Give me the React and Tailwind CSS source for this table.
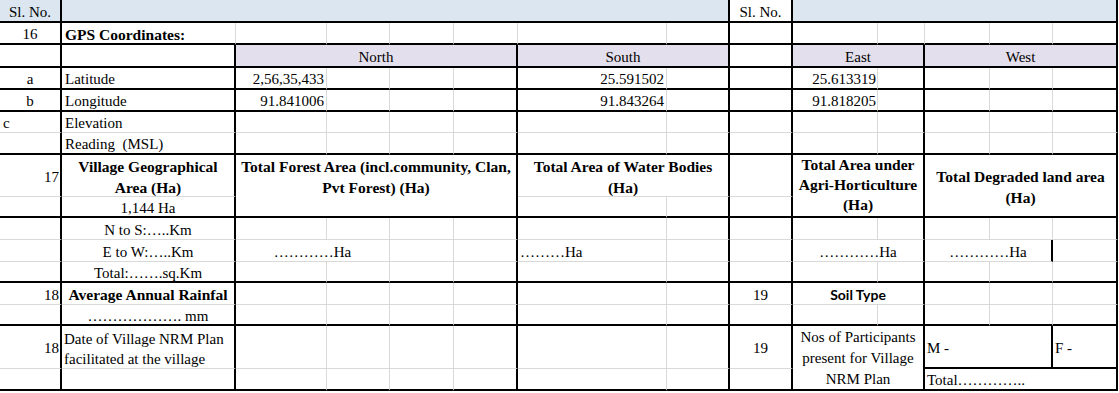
import React from 'react';

// border classes for a cell's right / bottom edge
const rb = {
  k: 'border-r-2 border-r-black',
  g: 'border-r border-r-[#d9d9d9]',
};
const bb = {
  k: 'border-b-2 border-b-black',
  g: 'border-b border-b-[#d9d9d9]',
};

function C({ s = '', r = 'g', b = 'g', className = '', children }) {
  return (
    <div className={`${s} ${rb[r]} ${bb[b]} flex items-center whitespace-nowrap pt-[3px] ${className}`}>
      {children}
    </div>
  );
}

// empty cells C..N for the standard body rows
function Blanks({ b = 'g' }) {
  return (
    <>
      <C b={b} />
      <C b={b} />
      <C b={b} />
      <C r="k" b={b} />
      <C b={b} />
      <C r="k" b={b} />
      <C r="k" b={b} />
      <C b={b} />
      <C r="k" b={b} />
      <C b={b} />
      <C b={b} />
      <C r="k" b={b} />
    </>
  );
}

function Blank6({ b = 'g' }) {
  // C..H
  return (
    <>
      <C b={b} />
      <C b={b} />
      <C b={b} />
      <C r="k" b={b} />
      <C b={b} />
      <C r="k" b={b} />
    </>
  );
}

export default function App() {
  const serif = { fontFamily: '"Liberation Serif", "Times New Roman", serif' };

  return (
    <div className="w-[1119px] h-[393px] bg-white text-black text-[15px] leading-none" style={serif}>
      <div className="grid grid-cols-[62px_174px_91px_63px_64px_64px_149px_63px_63px_85px_47px_65px_63px_65px] grid-rows-[23px_22px_23px_22px_22px_21px_22px_42px_21px_22px_22px_21px_22px_21px_43px_22px]">
        {/* row 1 */}
        <C r="k" b="k" className="justify-center bg-[#dce6f1]">Sl. No.</C>
        <C s="col-span-7" r="k" b="k" className="bg-[#dce6f1]" />
        <C r="k" b="k" className="justify-center">Sl. No.</C>
        <C s="col-span-5" r="k" b="k" className="bg-[#dce6f1]" />

        {/* row 2 */}
        <C r="k" b="k" className="justify-center">16</C>
        <C b="k" className="pl-[3px] font-bold text-[15.5px]">GPS Coordinates:</C>
        <C b="k" />
        <C b="k" />
        <C b="k" />
        <C b="k" />
        <C b="k" />
        <C r="k" b="k" />
        <C r="k" b="k" />
        <C b="k" />
        <C b="k" />
        <C b="k" />
        <C b="k" />
        <C r="k" b="k" />

        {/* row 3 */}
        <C r="k" b="k" />
        <C r="k" b="k" />
        <C s="col-span-4" r="k" b="k" className="justify-center bg-[#e4dfec]">North</C>
        <C s="col-span-2" r="k" b="k" className="justify-center bg-[#e4dfec]">South</C>
        <C r="k" b="k" />
        <C s="col-span-2" r="k" b="k" className="justify-center bg-[#e4dfec]">East</C>
        <C s="col-span-3" r="k" b="k" className="justify-center bg-[#e4dfec]">West</C>

        {/* row 4 */}
        <C r="k" b="k" className="justify-center">a</C>
        <C r="k" b="k" className="pl-[3px]">Latitude</C>
        <C b="k" className="justify-end pr-[2px]">2,56,35,433</C>
        <C b="k" />
        <C b="k" />
        <C r="k" b="k" />
        <C b="k" className="justify-end pr-[2px]">25.591502</C>
        <C r="k" b="k" />
        <C r="k" b="k" />
        <C b="k" className="justify-end pr-[1px]">25.613319</C>
        <C r="k" b="k" />
        <C b="k" />
        <C b="k" />
        <C r="k" b="k" />

        {/* row 5 */}
        <C r="k" b="k" className="justify-center">b</C>
        <C r="k" b="k" className="pl-[3px]">Longitude</C>
        <C b="k" className="justify-end pr-[2px]">91.841006</C>
        <C b="k" />
        <C b="k" />
        <C r="k" b="k" />
        <C b="k" className="justify-end pr-[2px]">91.843264</C>
        <C r="k" b="k" />
        <C r="k" b="k" />
        <C b="k" className="justify-end pr-[1px]">91.818205</C>
        <C r="k" b="k" />
        <C b="k" />
        <C b="k" />
        <C r="k" b="k" />

        {/* row 6 */}
        <C r="k" className="pl-[3px]">c</C>
        <C r="k" className="pl-[3px]">Elevation</C>
        <Blanks />

        {/* row 7 */}
        <C r="k" b="k" />
        <C r="k" b="k" className="pl-[3px]">Reading&nbsp;&nbsp;(MSL)</C>
        <Blanks b="k" />

        {/* rows 8-9 */}
        <C r="k" className="justify-end pr-[1px]">17</C>
        <C r="k" className="flex-col justify-center font-bold text-[15.5px] leading-[21px]">
          <span>Village Geographical</span>
          <span>Area (Ha)</span>
        </C>
        <C s="col-span-4 row-span-2" r="k" b="k" className="flex-col !items-center !justify-start !pt-[1px] font-bold text-[15.5px] leading-[21px]">
          <span>Total Forest Area (incl.community, Clan,</span>
          <span>Pvt Forest) (Ha)</span>
        </C>
        <C s="col-span-2" r="k" className="flex-col justify-center font-bold text-[15.5px] leading-[21px]">
          <span>Total Area of Water Bodies</span>
          <span>(Ha)</span>
        </C>
        <C r="k" />
        <C s="col-span-2 row-span-2" r="k" b="k" className="flex-col !items-center !justify-start !pt-0 font-bold text-[15.5px] leading-[20px]">
          <span>Total Area under</span>
          <span>Agri-Horticulture</span>
          <span>(Ha)</span>
        </C>
        <C s="col-span-3 row-span-2" r="k" b="k" className="flex-col justify-center font-bold text-[15.5px] leading-[21px]">
          <span>Total Degraded land area</span>
          <span>(Ha)</span>
        </C>
        <C r="k" b="k" />
        <C r="k" b="k" className="justify-center">1,144 Ha</C>
        <C b="k" />
        <C r="k" b="k" />
        <C r="k" b="k" />

        {/* row 10 */}
        <C r="k" />
        <C r="k" className="justify-center">N to S:…..Km</C>
        <Blanks />

        {/* row 11 */}
        <C r="k" />
        <C r="k" className="justify-center">E to W:…..Km</C>
        <C s="col-span-2" className="justify-center">…………Ha</C>
        <C />
        <C r="k" />
        <C className="pl-[2px]">………Ha</C>
        <C r="k" />
        <C r="k" />
        <C s="col-span-2" r="k" className="justify-center">…………Ha</C>
        <C s="col-span-2" r="k" className="justify-center">…………Ha</C>
        <C r="k" />

        {/* row 12 */}
        <C r="k" b="k" />
        <C r="k" b="k" className="justify-center">Total:…….sq.Km</C>
        <Blanks b="k" />

        {/* row 13 */}
        <C r="k" className="justify-end pr-[1px]">18</C>
        <C r="k" className="justify-center font-bold text-[15.5px]">Average Annual Rainfal</C>
        <Blank6 />
        <C r="k" className="justify-center">19</C>
        <C s="col-span-2" r="k" className="justify-center font-bold text-[14px]">
          <span style={{ fontFamily: 'Lato, "Liberation Sans", sans-serif' }}>Soil Type</span>
        </C>
        <C />
        <C />
        <C r="k" />

        {/* row 14 */}
        <C r="k" b="k" />
        <C r="k" b="k" className="justify-center">………………. mm</C>
        <Blank6 b="k" />
        <C r="k" b="k" />
        <C b="k" />
        <C r="k" b="k" />
        <C b="k" />
        <C b="k" />
        <C r="k" b="k" />

        {/* rows 15-16 */}
        <C r="k" className="justify-end pr-[1px]">18</C>
        <C r="k" className="flex-col !items-start justify-center pl-[2px] leading-[20px]">
          <span>Date of Village NRM Plan</span>
          <span>facilitated at the village</span>
        </C>
        <Blank6 />
        <C r="k" className="justify-center">19</C>
        <C s="col-span-2 row-span-2" r="k" b="k" className="flex-col !items-center !justify-start !pt-[1px] leading-[21px]">
          <span>Nos of Participants</span>
          <span>present for Village</span>
          <span>NRM Plan</span>
        </C>
        <C s="col-span-2" r="k" b="k" className="pl-[2px]">M -</C>
        <C r="k" b="k" className="pl-[2px]">F -</C>

        <C r="k" b="k" />
        <C r="k" b="k" />
        <Blank6 b="k" />
        <C r="k" b="k" />
        <C s="col-span-3" r="k" b="k" className="pl-[2px]">Total…………..</C>
      </div>
    </div>
  );
}
